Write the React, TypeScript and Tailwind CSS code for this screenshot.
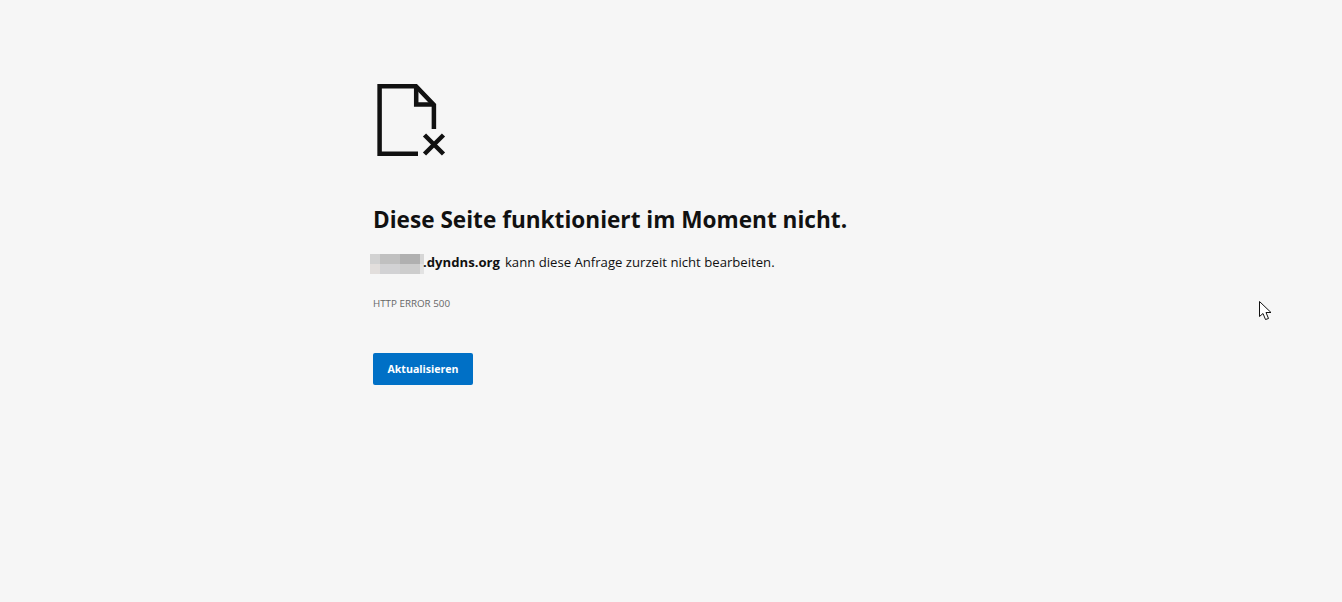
const pixels = [
  ["w-[10px]", "bg-[#d2d2d2]"],
  ["w-[20px]", "bg-[#c0c0c0]"],
  ["w-[20px]", "bg-[#b0b0b0]"],
  ["w-[4px]", "bg-[#d6d6d6]"],
  ["w-[10px]", "bg-[#e2dedc]"],
  ["w-[20px]", "bg-[#d2d2d4]"],
  ["w-[20px]", "bg-[#cdcdcd]"],
  ["w-[4px]", "bg-[#e2e2e2]"],
];

const App = () => {
  return (
    <div className="relative h-[602px] overflow-hidden bg-[#f6f6f6] pl-[373px] pt-[80px] font-['Open_Sans','Noto_Sans',sans-serif] text-[#111111]">
      {/* Broken page icon */}
      <svg width="76" height="80" viewBox="0 0 76 80" fill="none" stroke="#111111" strokeWidth="4.5" className="block">
        <path d="M45 73.7H6.6V6.3H43L60.9 25V49" />
        <path d="M43.2 6V24.5H61" />
        <path d="M51.5 55L70.5 74M70.5 55L51.5 74" />
      </svg>

      <h1 className="mt-[44px] text-[22.6px] leading-[32px] font-bold">
        Diese Seite funktioniert im Moment nicht.
      </h1>

      <div className="mt-[15px] flex h-[24px] items-center text-[13.15px]">
        <div className="-ml-[3px] mt-[2px] flex h-[20px] w-[54px] flex-wrap">
          {pixels.map(([w, bg], i) => (
            <div key={i} className={`h-[10px] ${w} ${bg}`} />
          ))}
        </div>
        <span className="-ml-[1px] font-bold">.dyndns.org</span>
        <span className="ml-[5px]">kann diese Anfrage zurzeit nicht bearbeiten.</span>
      </div>

      <p className="mt-[22px] text-[9.8px] leading-[14px] font-medium text-[#666666]">HTTP ERROR 500</p>

      <button className="mt-[42px] block h-[32px] w-[100px] rounded-[2px] bg-[#0070c6] pt-[2px] text-center text-[10.6px] font-bold text-white">
        Aktualisieren
      </button>

      {/* Mouse pointer */}
      <svg width="14" height="21" viewBox="0 0 14 21" className="absolute left-[1259px] top-[301px]">
        <path d="M0.5 0.5V15.5L4 12.5L6.5 18.5L9.5 17.5L7 11.5H12L0.5 0.5Z" fill="#ffffff" stroke="#111111" strokeWidth="1" />
      </svg>
    </div>
  );
};

export default App;
